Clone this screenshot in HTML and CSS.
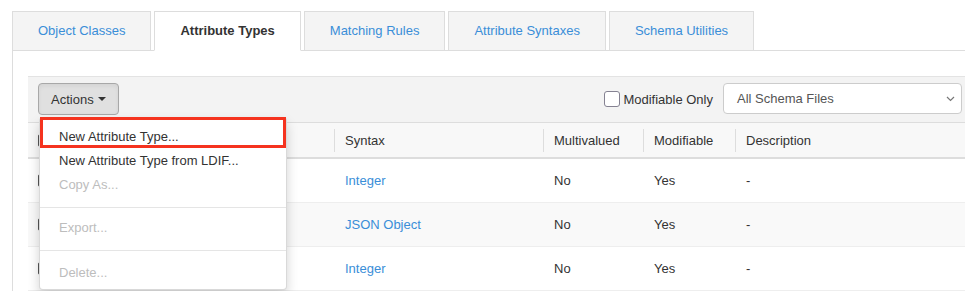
FILE: index.html
```html
<!DOCTYPE html>
<html lang="en">
<head>
    <meta charset="UTF-8">
    <meta name="viewport" content="width=device-width, initial-scale=1.0">
    <title>Schema - Attribute Types</title>
    <link rel="stylesheet" href="styles.css">
</head>
<body>

    <div class="page">
        <ul class="tabs">
            <li class="tab"><a href="#">Object Classes</a></li>
            <li class="tab active"><a href="#">Attribute Types</a></li>
            <li class="tab"><a href="#">Matching Rules</a></li>
            <li class="tab"><a href="#">Attribute Syntaxes</a></li>
            <li class="tab"><a href="#">Schema Utilities</a></li>
        </ul>

        <div class="panel">
            <div class="toolbar">
                <div class="actions">
                    <button class="btn">Actions <span class="caret"></span></button>
                    <ul class="menu">
                        <li class="mark"></li>
                        <li class="item">New Attribute Type...</li>
                        <li class="item">New Attribute Type from LDIF...</li>
                        <li class="item disabled">Copy As...</li>
                        <li class="divider"></li>
                        <li class="item disabled">Export...</li>
                        <li class="divider second"></li>
                        <li class="item disabled">Delete...</li>
                    </ul>
                </div>
                <label class="check"><span class="box"></span>Modifiable Only</label>
                <div class="select">
                    <span>All Schema Files</span>
                    <svg width="9" height="6" viewBox="0 0 9 6"><path d="M1 1l3.5 3.5L8 1" fill="none" stroke="#777" stroke-width="1.2"/></svg>
                </div>
            </div>

            <table class="grid">
                <colgroup>
                    <col class="c-check">
                    <col class="c-name">
                    <col class="c-syntax">
                    <col class="c-multi">
                    <col class="c-mod">
                    <col>
                </colgroup>
                <thead>
                    <tr>
                        <th class="cell-check"><span class="cb"></span></th>
                        <th><div class="th-label">&nbsp;</div></th>
                        <th><div class="th-label">Syntax</div></th>
                        <th><div class="th-label">Multivalued</div></th>
                        <th><div class="th-label">Modifiable</div></th>
                        <th><div class="th-label">Description</div></th>
                    </tr>
                </thead>
                <tbody>
                    <tr>
                        <td class="cell-check"><span class="cb"></span></td>
                        <td></td>
                        <td><a href="#">Integer</a></td>
                        <td>No</td>
                        <td>Yes</td>
                        <td>-</td>
                    </tr>
                    <tr>
                        <td class="cell-check"><span class="cb"></span></td>
                        <td></td>
                        <td><a href="#">JSON Object</a></td>
                        <td>No</td>
                        <td>Yes</td>
                        <td>-</td>
                    </tr>
                    <tr>
                        <td class="cell-check"><span class="cb"></span></td>
                        <td></td>
                        <td><a href="#">Integer</a></td>
                        <td>No</td>
                        <td>Yes</td>
                        <td>-</td>
                    </tr>
                </tbody>
            </table>
        </div>
    </div>

</body>
</html>
```

FILE: styles.css
```css
html, body {
    margin: 0;
    padding: 0;
    overflow: hidden;
    background: #fff;
}

body {
    font-family: 'Liberation Sans', Arial, sans-serif;
    font-size: 13px;
    color: #333;
}

a {
    color: #3a8ed8;
    text-decoration: none;
}

.page {
    width: 976px;
    margin-left: 12px;
    padding-top: 11px;
}

/* tabs */
.tabs {
    display: flex;
    list-style: none;
    margin: 0;
    padding: 0;
    border-bottom: 1px solid #ddd;
}

.tab {
    margin: 0 3px -1px 0;
}

.tab a {
    display: block;
    padding: 10px 25px;
    line-height: 18px;
    background: #f4f4f4;
    border: 1px solid #ddd;
    color: #3a8ed8;
}

.tab.active a {
    background: #fff;
    border-bottom-color: transparent;
    color: #333;
    font-weight: bold;
}

/* panel */
.panel {
    border-left: 1px solid #ddd;
    border-right: 1px solid #ddd;
    padding: 25px 15px 0;
}

.toolbar {
    display: flex;
    align-items: center;
    padding: 6px 10px 7px;
    background: #f3f3f3;
    border-top: 1px solid #e3e3e3;
    border-bottom: 1px solid #ddd;
}

.actions {
    position: relative;
}

.btn {
    display: flex;
    align-items: center;
    height: 32px;
    padding: 0 12px;
    font-family: inherit;
    font-size: 13px;
    color: #333;
    background: #e0e0e0;
    border: 1px solid #a8a8a8;
    border-radius: 4px;
    box-shadow: inset 0 2px 4px rgba(0, 0, 0, 0.06);
}

.caret {
    display: inline-block;
    width: 0;
    height: 0;
    margin-left: 4px;
    border-top: 4px solid #333;
    border-left: 4px solid transparent;
    border-right: 4px solid transparent;
}

.menu {
    position: absolute;
    top: 100%;
    left: 1px;
    z-index: 10;
    width: 248px;
    box-sizing: border-box;
    margin: 2px 0 0;
    padding: 7px 0 4px;
    list-style: none;
    background: #fff;
    border: 1px solid rgba(0, 0, 0, 0.15);
    border-radius: 4px;
    box-shadow: 0 6px 12px rgba(0, 0, 0, 0.175);
}

.item {
    padding: 3px 19px;
    line-height: 18px;
    color: #333;
    white-space: nowrap;
}

.item.disabled {
    color: #bdbdbd;
}

.divider {
    height: 1px;
    margin: 10px 0 8px;
    background: #e5e5e5;
}

.divider.second {
    margin: 10px 0 10px;
}

/* red highlight drawn over the first entry */
.mark {
    position: absolute;
    top: -1px;
    left: 0;
    right: 0;
    height: 31px;
    box-sizing: border-box;
    border: 3px solid #f5331f;
}

.check {
    display: flex;
    align-items: center;
    margin-left: auto;
    color: #333;
}

.box {
    width: 14px;
    height: 14px;
    margin-right: 3px;
    background: #fff;
    border: 1px solid #858292;
    border-radius: 3px;
}

.select {
    display: flex;
    align-items: center;
    justify-content: space-between;
    align-self: flex-start;
    width: 239px;
    height: 31px;
    box-sizing: border-box;
    margin-left: 10px;
    padding: 0 6px 0 13px;
    background: #fff;
    border: 1px solid #ccc;
    border-radius: 4px;
    color: #555;
}

/* table */
.grid {
    width: 100%;
    table-layout: fixed;
    border-collapse: collapse;
}

.c-check { width: 27px; }
.c-name { width: 279px; }
.c-syntax { width: 209px; }
.c-multi { width: 100px; }
.c-mod { width: 92px; }

.grid th {
    padding: 6px 0 5px;
    font-weight: normal;
    text-align: left;
    background: #f8f8f8;
    border-bottom: 2px solid #ddd;
}

.th-label {
    padding: 2px 10px;
    line-height: 19px;
    border-left: 1px solid #ddd;
    white-space: nowrap;
}

.grid td {
    padding: 12px 11px;
    line-height: 19px;
    border-bottom: 1px solid #eee;
    white-space: nowrap;
}

.grid tbody tr:nth-child(2) td {
    background: #f9f9f9;
}

.grid .cell-check {
    padding-left: 10px;
    padding-right: 0;
}

.cb {
    display: block;
    width: 11px;
    height: 11px;
    border: 1px solid #555;
    border-radius: 2px;
}
```
